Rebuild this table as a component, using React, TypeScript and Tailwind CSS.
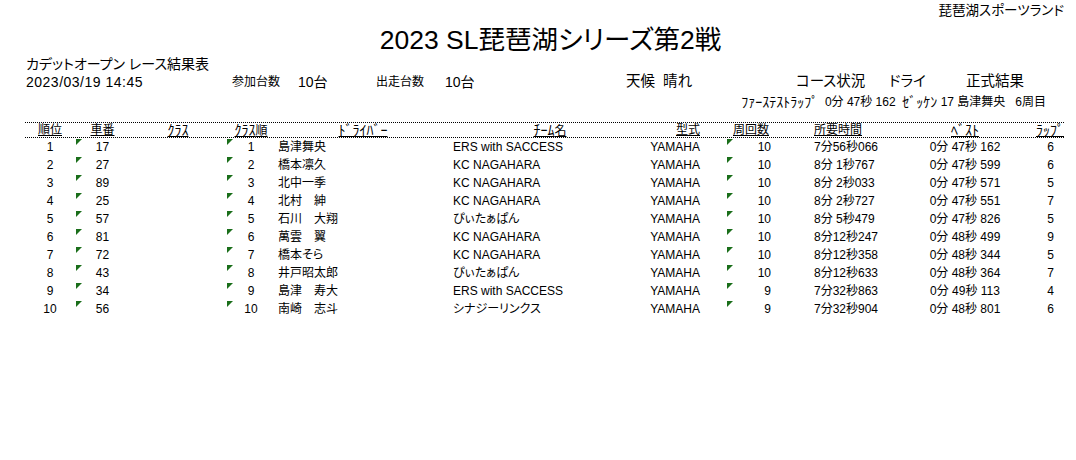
import React from "react";

const rows: string[][] = [
  ["1", "17", "1", "島津舞央", "ERS with SACCESS", "10", "7分56秒066", "0分 47秒 162", "6"],
  ["2", "27", "2", "橋本凛久", "KC NAGAHARA", "10", "8分 1秒767", "0分 47秒 599", "6"],
  ["3", "89", "3", "北中一季", "KC NAGAHARA", "10", "8分 2秒033", "0分 47秒 571", "5"],
  ["4", "25", "4", "北村　紳", "KC NAGAHARA", "10", "8分 2秒727", "0分 47秒 551", "7"],
  ["5", "57", "5", "石川　大翔", "ぴぃたぁぱん", "10", "8分 5秒479", "0分 47秒 826", "5"],
  ["6", "81", "6", "萬雲　翼", "KC NAGAHARA", "10", "8分12秒247", "0分 48秒 499", "9"],
  ["7", "72", "7", "橋本そら", "KC NAGAHARA", "10", "8分12秒358", "0分 48秒 344", "5"],
  ["8", "43", "8", "井戸昭太郎", "ぴぃたぁぱん", "10", "8分12秒633", "0分 48秒 364", "7"],
  ["9", "34", "9", "島津　寿大", "ERS with SACCESS", "9", "7分32秒863", "0分 49秒 113", "4"],
  ["10", "56", "10", "南崎　志斗", "シナジーリンクス", "9", "7分32秒904", "0分 48秒 801", "6"],
];

const grid =
  "grid grid-cols-[50px_55px_96px_50px_174px_200px_76px_54px_120px_130px_34px]";

function Tri() {
  return (
    <span className="absolute left-[1px] top-[1px] w-[6px] h-[6px] bg-[#1a6e1a] [clip-path:polygon(0_0,100%_0,0_100%)]" />
  );
}

function Hk({ children }: { children: React.ReactNode }) {
  return <span className="text-[14px]">{children}</span>;
}

export default function App() {
  return (
    <div className="w-[1076px] h-[460px] bg-white text-black font-['Liberation_Sans','Noto_Sans_CJK_JP',sans-serif] [font-feature-settings:'palt'] overflow-hidden">
      <div className="h-[20px] flex items-center justify-end pr-[12px] pt-[3px] text-[13.5px]">
        琵琶湖スポーツランド
      </div>
      <div className="h-[36px] flex items-center justify-center pl-[25px] pt-[6px] text-[26.5px]">
        2023 SL琵琶湖シリーズ第2戦
      </div>
      <div className="h-[16px] flex items-center pl-[26px] text-[14px]">
        カデットオープン レース結果表
      </div>
      <div className="h-[20px] flex items-center pl-[26px] text-[14px] whitespace-pre">
        <div className="w-[206px] shrink-0 tracking-[0.5px]">2023/03/19 14:45</div>
        <div className="w-[66px] shrink-0 text-[12px]">参加台数</div>
        <div className="w-[78px] shrink-0">10台</div>
        <div className="w-[69px] shrink-0 text-[12px]">出走台数</div>
        <div className="w-[181px] shrink-0">10台</div>
        <div className="w-[37px] shrink-0 text-[14.5px]">天候</div>
        <div className="w-[133px] shrink-0 text-[14.5px]">晴れ</div>
        <div className="w-[93px] shrink-0 text-[14.5px]">コース状況</div>
        <div className="w-[77px] shrink-0 text-[14.5px]">ドライ</div>
        <div className="shrink-0 text-[14.5px]">正式結果</div>
      </div>
      <div className="h-[20px] flex items-center justify-end pr-[30px] text-[12px] whitespace-pre">
        <Hk>ﾌｧｰｽﾃｽﾄﾗｯﾌﾟ</Hk>  0分 47秒 162  <Hk>ｾﾞｯｹﾝ</Hk> 17 島津舞央   6周目
      </div>

      <div className="mt-[10px] ml-[25px] w-[1039px]">
        <div
          className={`${grid} h-[16px] border-t border-b border-dotted border-black text-[12px] leading-[15px] [&>div]:underline [&>div]:underline-offset-[1px]`}
        >
          <div className="text-center">順位</div>
          <div className="text-center">車番</div>
          <div className="text-center"><Hk>ｸﾗｽ</Hk></div>
          <div className="text-center"><Hk>ｸﾗｽ</Hk>順</div>
          <div className="text-center"><Hk>ﾄﾞﾗｲﾊﾞｰ</Hk></div>
          <div className="text-center"><Hk>ﾁｰﾑ</Hk>名</div>
          <div className="text-right pr-[26px]">型式</div>
          <div className="text-right pr-[11px]">周回数</div>
          <div className="text-left pl-[34px]">所要時間</div>
          <div className="text-center"><Hk>ﾍﾞｽﾄ</Hk></div>
          <div className="text-right"><Hk>ﾗｯﾌﾟ</Hk></div>
        </div>
        {rows.map((r) => (
          <div key={r[0]} className={`${grid} h-[18px] text-[12px] leading-[19px] whitespace-pre`}>
            <div className="text-center">{r[0]}</div>
            <div className="relative text-center">
              <Tri />
              {r[1]}
            </div>
            <div />
            <div className="relative text-center">
              <Tri />
              {r[2]}
            </div>
            <div className="pl-[2px]">{r[3]}</div>
            <div className="pl-[3px]">{r[4]}</div>
            <div className="text-right pr-[26px]">YAMAHA</div>
            <div className="relative text-right pr-[9px]">
              <Tri />
              {r[5]}
            </div>
            <div className="pl-[34px]">{r[6]}</div>
            <div className="text-center">{r[7]}</div>
            <div className="text-right pr-[10px]">{r[8]}</div>
          </div>
        ))}
      </div>
    </div>
  );
}
